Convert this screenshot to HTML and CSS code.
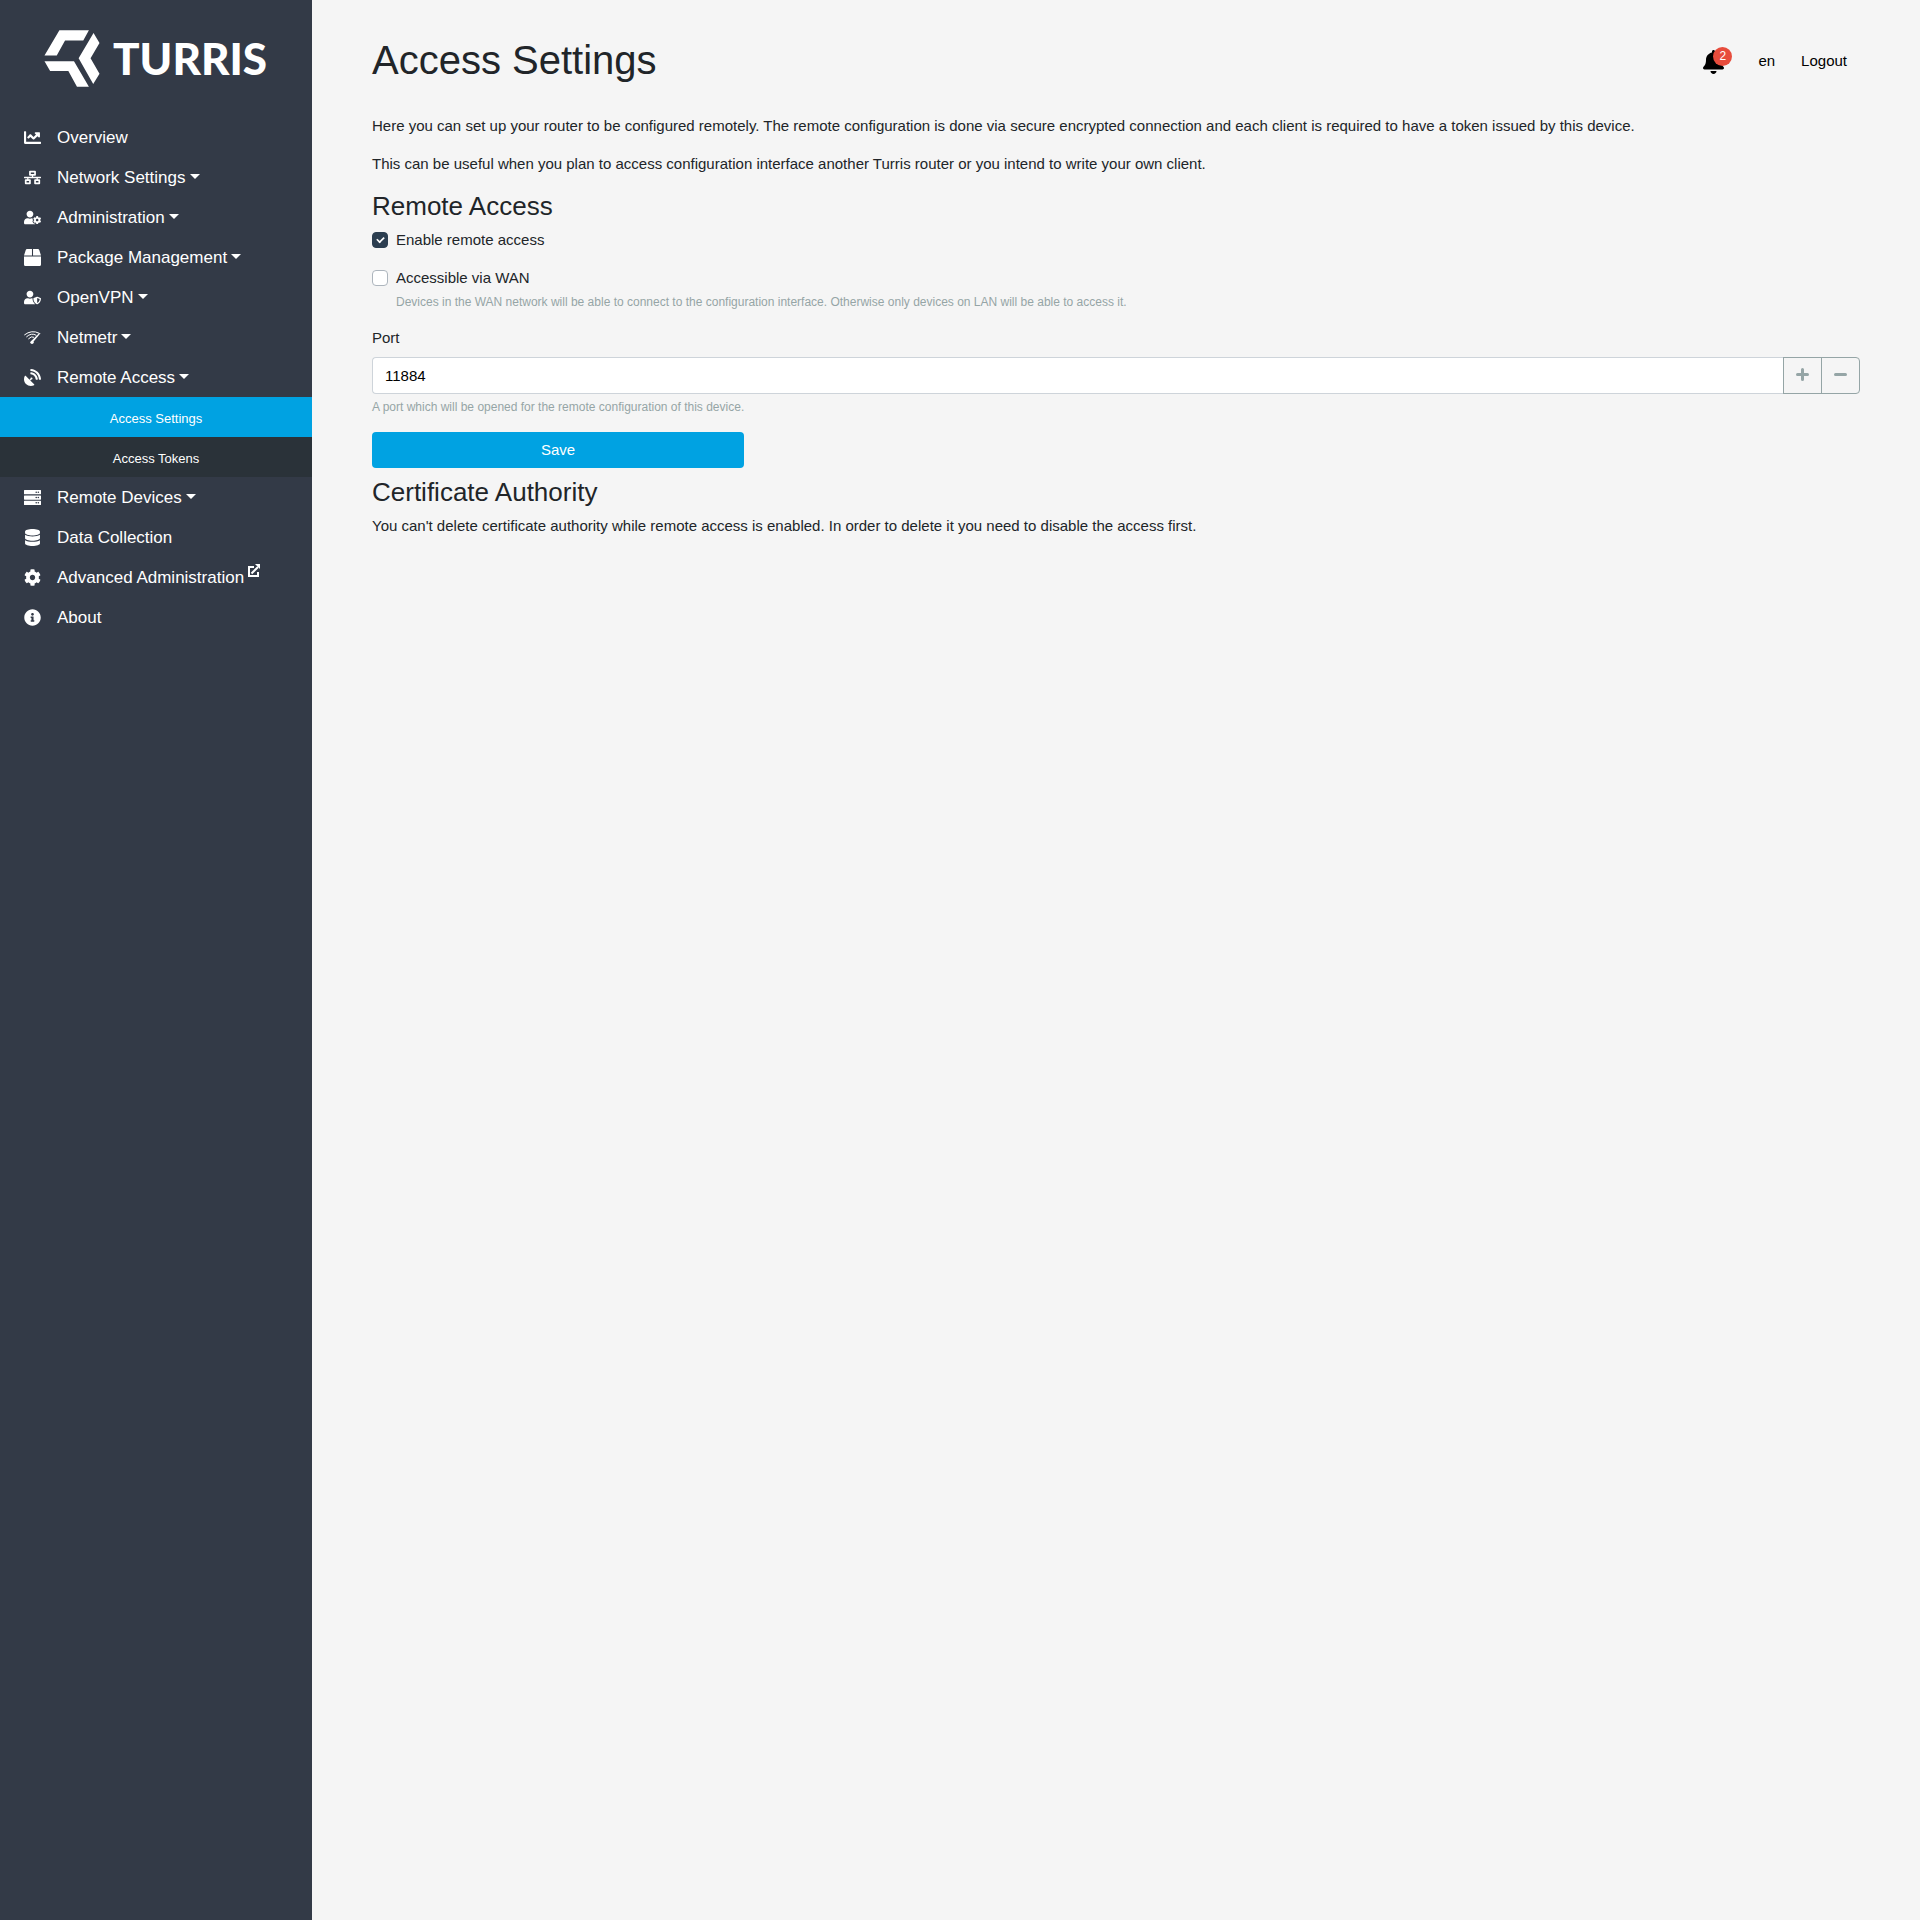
FILE: index.html
```html
<!DOCTYPE html>
<html lang="en">
<head>
<meta charset="utf-8">
<meta name="viewport" content="width=device-width, initial-scale=1">
<title>Access Settings - Turris</title>
<link rel="stylesheet" href="styles.css">
</head>
<body>
<div class="layout">
  <aside class="sidebar">
    <a class="logo" href="#" aria-label="Turris">
      <svg class="logo-mark" viewBox="0 0 168 172" aria-hidden="true"><path d="M46 1H135L118 32H63L38 77H1ZM149 9L167 39L140 85L167 132L148 163L104 85ZM1 94H90L135 171H99L73 124H18Z"/></svg>
      <span class="logo-text">TURRIS</span>
    </a>
    <nav class="menu">
      <a class="menu-item" href="#"><svg class="icon" viewBox="0 0 512 512"><path d="M496 384H64V80c0-8.840-7.160-16-16-16H16C7.160 64 0 71.160 0 80v336c0 17.670 14.330 32 32 32h464c8.840 0 16-7.160 16-16v-32c0-8.840-7.160-16-16-16zM464 96H345.940c-21.380 0-32.090 25.850-16.970 40.970l32.400 32.400L288 242.750l-73.370-73.370c-12.500-12.500-32.760-12.500-45.250 0l-68.690 68.690c-6.250 6.250-6.250 16.380 0 22.630l22.620 22.620c6.250 6.250 16.380 6.250 22.630 0L192 237.250l73.370 73.370c12.500 12.500 32.760 12.500 45.250 0l96-96 32.400 32.400c15.120 15.120 40.970 4.410 40.970-16.970V112c.01-8.840-7.150-16-15.990-16z"/></svg><span>Overview</span></a>
      <a class="menu-item has-caret" href="#"><svg class="icon" viewBox="0 0 640 512"><path d="M640 264v-16c0-8.840-7.160-16-16-16H344v-40h72c17.670 0 32-14.330 32-32V32c0-17.670-14.330-32-32-32H224c-17.670 0-32 14.330-32 32v128c0 17.670 14.330 32 32 32h72v40H16c-8.840 0-16 7.160-16 16v16c0 8.840 7.160 16 16 16h104v40H64c-17.670 0-32 14.330-32 32v128c0 17.670 14.330 32 32 32h160c17.670 0 32-14.330 32-32V352c0-17.670-14.330-32-32-32h-56v-40h304v40h-56c-17.670 0-32 14.330-32 32v128c0 17.670 14.330 32 32 32h160c17.670 0 32-14.330 32-32V352c0-17.670-14.330-32-32-32h-56v-40h104c8.840 0 16-7.160 16-16zM256 128V64h128v64H256zm-64 320H96v-64h96v64zm352 0h-96v-64h96v64z"/></svg><span>Network Settings</span></a>
      <a class="menu-item has-caret" href="#"><svg class="icon" viewBox="0 0 640 512"><path d="M610.5 373.3c2.6-14.1 2.6-28.5 0-42.6l25.8-14.9c3-1.7 4.3-5.2 3.3-8.5-6.7-21.6-18.2-41.2-33.2-57.4-2.3-2.5-6-3.1-9-1.4l-25.8 14.9c-10.9-9.3-23.4-16.5-36.9-21.3v-29.8c0-3.4-2.4-6.4-5.7-7.1-22.3-5-45-4.8-66.2 0-3.3.7-5.7 3.7-5.7 7.1v29.8c-13.5 4.8-26 12-36.9 21.3l-25.8-14.9c-2.9-1.7-6.7-1.1-9 1.4-15 16.2-26.5 35.8-33.2 57.4-1 3.3.4 6.8 3.3 8.5l25.8 14.9c-2.6 14.1-2.6 28.5 0 42.6l-25.8 14.9c-3 1.7-4.3 5.2-3.3 8.5 6.7 21.6 18.2 41.1 33.2 57.4 2.3 2.5 6 3.1 9 1.4l25.8-14.9c10.9 9.3 23.4 16.5 36.900 21.3v29.8c0 3.4 2.4 6.4 5.7 7.1 22.3 5 45 4.8 66.2 0 3.3-.7 5.7-3.7 5.7-7.1v-29.8c13.5-4.8 26-12 36.900-21.3l25.8 14.9c2.9 1.7 6.7 1.1 9-1.4 15-16.2 26.5-35.8 33.2-57.4 1-3.3-.4-6.8-3.3-8.5l-25.8-14.9zM496 400.5c-26.8 0-48.5-21.8-48.5-48.5s21.8-48.5 48.5-48.5 48.5 21.8 48.5 48.5-21.7 48.5-48.5 48.5zM224 256c70.7 0 128-57.3 128-128S294.7 0 224 0 96 57.3 96 128s57.3 128 128 128zm201.2 226.5c-2.3-1.2-4.6-2.6-6.8-3.9l-7.9 4.6c-6 3.4-12.8 5.3-19.6 5.3-10.9 0-21.4-4.6-28.9-12.6-18.3-19.8-32.3-43.9-40.2-69.6-5.5-17.7 1.9-36.4 17.9-45.7l7.900-4.600c-.1-2.6-.1-5.2 0-7.8l-7.9-4.6c-16-9.2-23.4-28-17.9-45.700.9-2.9 2.2-5.8 3.2-8.7-3.8-.3-7.500-1.200-11.400-1.200h-16.700c-22.200 10.200-46.900 16-72.900 16s-50.600-5.800-72.900-16h-16.700C60.200 288 0 348.200 0 422.400V464c0 26.500 21.500 48 48 48h352c10.100 0 19.500-3.200 27.200-8.500-1.200-3.800-2-7.700-2-11.800v-9.200z"/></svg><span>Administration</span></a>
      <a class="menu-item has-caret" href="#"><svg class="icon" viewBox="0 0 512 512"><path d="M509.500 184.600L458.900 32.800C452.400 13.200 434.100 0 413.400 0H272v192h238.700c-.4-2.500-.4-5-1.200-7.400zM240 0H98.600c-20.700 0-39 13.200-45.500 32.800L2.500 184.600c-.8 2.400-.8 4.900-1.200 7.400H240V0zM0 224v240c0 26.500 21.500 48 48 48h416c26.500 0 48-21.500 48-48V224H0z"/></svg><span>Package Management</span></a>
      <a class="menu-item has-caret" href="#"><svg class="icon" viewBox="0 0 640 512"><path d="M622.3 271.1l-115.2-45c-4.1-1.6-12.6-3.7-22.2 0l-115.2 45c-10.7 4.2-17.7 14-17.7 24.9 0 111.6 68.7 188.8 132.9 213.9 9.6 3.7 18 1.6 22.2 0C558.4 489.9 640 420.5 640 296c0-10.9-7-20.7-17.7-24.9zM496 462.4V273.3l95.5 37.3c-5.6 87.1-60.9 135.4-95.5 151.8zM224 256c70.7 0 128-57.3 128-128S294.7 0 224 0 96 57.3 96 128s57.3 128 128 128zm96 40c0-2.500.8-4.800 1.100-7.200-2.500-.1-4.900-.8-7.500-.8h-16.700c-22.200 10.200-46.900 16-72.900 16s-50.600-5.800-72.900-16h-16.700C60.200 288 0 348.200 0 422.400V464c0 26.500 21.500 48 48 48h352c6.800 0 13.300-1.500 19.200-4-54-42.900-99.200-116.700-99.200-212z"/></svg><span>OpenVPN</span></a>
      <a class="menu-item has-caret" href="#"><svg class="icon" viewBox="0 0 51 51"><path class="thin" d="M1 18Q23 1 46 13M7 24Q22 10 37 19M13 30Q22 20 30 25"/><path d="M50 12L27 40L21 37L45 13Z"/><circle cx="24" cy="40" r="5"/></svg><span>Netmetr</span></a>
      <a class="menu-item has-caret" href="#"><svg class="icon" viewBox="0 0 512 512"><path d="M305.450 462.590c7.390 7.300 6.190 20.100-3 25-77.710 41.800-176.730 29.910-242.340-35.710C-5.500 386.280-17.400 287.360 24.410 209.550c4.890-9.100 17.690-10.300 25-3L166.230 323.370l27.390-27.390c-.69-2.610-1.590-5-1.590-7.820a32 32 0 1 1 32 32c-2.800 0-5.200-.89-7.800-1.590l-27.410 27.390ZM511.980 303.070a16.100 16.100 0 0 1-16 17H463.860a15.970 15.970 0 0 1-15.890-15C440.470 175.550 336.450 70.530 207.030 63.530a15.840 15.840 0 0 1-15-15.910V16.030A16.090 16.090 0 0 1 209.030.02C372.250 8.620 503.470 139.840 511.980 303.070Zm-96.020-.3a16.210 16.210 0 0 1-16.110 17.300H367.640a16.070 16.070 0 0 1-15.890-14.710c-6.910-77.010-68.120-138.910-144.920-145.220a15.940 15.940 0 0 1-14.800-15.890V112.130a16.130 16.130 0 0 1 17.300-16.090C319.450 104.540 407.560 192.650 415.960 302.770Z"/></svg><span>Remote Access</span></a>
      <div class="submenu">
        <a class="submenu-item active" href="#">Access Settings</a>
        <a class="submenu-item" href="#">Access Tokens</a>
      </div>
      <a class="menu-item has-caret" href="#"><svg class="icon" viewBox="0 0 512 512"><path fill-rule="evenodd" d="M16 32H496a16 16 0 0 1 16 16V144a16 16 0 0 1-16 16H16a16 16 0 0 1-16-16V48a16 16 0 0 1 16-16ZM432 72a24 24 0 1 0 0 48a24 24 0 1 0 0-48ZM368 72a24 24 0 1 0 0 48a24 24 0 1 0 0-48ZM16 192H496a16 16 0 0 1 16 16V304a16 16 0 0 1-16 16H16a16 16 0 0 1-16-16V208a16 16 0 0 1 16-16ZM432 232a24 24 0 1 0 0 48a24 24 0 1 0 0-48ZM368 232a24 24 0 1 0 0 48a24 24 0 1 0 0-48ZM16 352H496a16 16 0 0 1 16 16V464a16 16 0 0 1-16 16H16a16 16 0 0 1-16-16V368a16 16 0 0 1 16-16ZM432 392a24 24 0 1 0 0 48a24 24 0 1 0 0-48ZM368 392a24 24 0 1 0 0 48a24 24 0 1 0 0-48Z"/></svg><span>Remote Devices</span></a>
      <a class="menu-item" href="#"><svg class="icon" viewBox="0 0 448 512"><path d="M448 73.143v45.714C448 159.143 347.667 192 224 192S0 159.143 0 118.857V73.143C0 32.857 100.333 0 224 0s224 32.857 224 73.143zM448 176v102.857C448 319.143 347.667 352 224 352S0 319.143 0 278.857V176c48.125 33.143 136.208 48.572 224 48.572S399.874 209.143 448 176zm0 160v102.857C448 479.143 347.667 512 224 512S0 479.143 0 438.857V336c48.125 33.143 136.208 48.572 224 48.572S399.874 369.143 448 336z"/></svg><span>Data Collection</span></a>
      <a class="menu-item" href="#"><svg class="icon" viewBox="0 0 512 512"><path d="M487.400 315.700l-42.600-24.600c4.300-23.200 4.300-47 0-70.200l42.600-24.600c4.900-2.800 7.100-8.600 5.500-14-11.100-35.600-30-67.800-54.700-94.600-3.800-4.100-10-5.100-14.800-2.300L380.800 110c-17.900-15.400-38.500-27.300-60.800-35.100V25.800c0-5.600-3.900-10.500-9.400-11.700-36.700-8.200-74.300-7.800-109.200 0-5.500 1.200-9.400 6.100-9.400 11.700V75c-22.200 7.900-42.800 19.800-60.800 35.100L88.700 85.500c-4.900-2.800-11-1.900-14.800 2.300-24.700 26.700-43.600 58.900-54.700 94.600-1.700 5.400.6 11.200 5.500 14L67.300 221c-4.300 23.200-4.300 47 0 70.200l-42.600 24.600c-4.900 2.800-7.100 8.600-5.500 14 11.100 35.600 30 67.800 54.700 94.600 3.800 4.100 10 5.100 14.800 2.300l42.600-24.600c17.900 15.400 38.500 27.300 60.800 35.100v49.200c0 5.600 3.900 10.500 9.400 11.700 36.700 8.200 74.300 7.800 109.200 0 5.500-1.200 9.400-6.100 9.400-11.700v-49.200c22.200-7.900 42.800-19.800 60.800-35.100l42.600 24.600c4.900 2.800 11 1.900 14.800-2.300 24.700-26.700 43.600-58.900 54.700-94.600 1.500-5.500-.7-11.300-5.600-14.100zM256 336c-44.100 0-80-35.900-80-80s35.900-80 80-80 80 35.900 80 80-35.900 80-80 80z"/></svg><span>Advanced Administration</span><svg class="external" viewBox="0 0 12 13"><path class="outline" d="M6 3H1V12H10V8M3.500 9.500L10 3"/><path d="M7 0H12V5Z"/></svg></a>
      <a class="menu-item" href="#"><svg class="icon" viewBox="0 0 512 512"><path d="M256 8C119.043 8 8 119.083 8 256c0 136.997 111.043 248 248 248s248-111.003 248-248C504 119.083 392.957 8 256 8zm0 110c23.196 0 42 18.804 42 42s-18.804 42-42 42-42-18.804-42-42 18.804-42 42-42zm56 254c0 6.627-5.373 12-12 12h-88c-6.627 0-12-5.373-12-12v-24c0-6.627 5.373-12 12-12h12v-64h-12c-6.627 0-12-5.373-12-12v-24c0-6.627 5.373-12 12-12h64c6.627 0 12 5.373 12 12v100h12c6.627 0 12 5.373 12 12v24z"/></svg><span>About</span></a>
    </nav>
  </aside>

  <main class="content">
    <header class="topbar">
      <h1>Access Settings</h1>
      <div class="topbar-actions">
        <button class="bell" type="button" aria-label="Notifications">
          <svg class="bell-icon" viewBox="0 0 448 512"><path d="M224 512c35.320 0 63.970-28.650 63.970-64H160.030c0 35.350 28.650 64 63.970 64zm215.390-149.710c-19.320-20.760-55.470-51.990-55.470-154.290 0-77.700-54.480-139.900-127.940-155.160V32c0-17.670-14.320-32-31.980-32s-31.980 14.330-31.980 32v20.840C118.560 68.100 64.080 130.300 64.080 208c0 102.300-36.150 133.530-55.470 154.290-6 6.450-8.660 14.160-8.610 21.710.11 16.400 12.980 32 32.100 32h383.800c19.120 0 32-15.600 32.100-32 .05-7.550-2.610-15.270-8.610-21.710z"/></svg>
          <span class="badge">2</span>
        </button>
        <button class="plain" type="button">en</button>
        <a class="plain" href="#">Logout</a>
      </div>
    </header>

    <p>Here you can set up your router to be configured remotely. The remote configuration is done via secure encrypted connection and each client is required to have a token issued by this device.</p>
    <p>This can be useful when you plan to access configuration interface another Turris router or you intend to write your own client.</p>

    <h2>Remote Access</h2>
    <form>
      <div class="check">
        <input type="checkbox" id="enable" checked>
        <label for="enable">Enable remote access</label>
      </div>
      <div class="check">
        <input type="checkbox" id="wan" aria-describedby="wan-help">
        <label for="wan">Accessible via WAN</label>
        <small id="wan-help" class="help">Devices in the WAN network will be able to connect to the configuration interface. Otherwise only devices on LAN will be able to access it.</small>
      </div>
      <div class="field">
        <label for="port">Port</label>
        <div class="input-group">
          <input type="text" inputmode="numeric" id="port" value="11884" aria-describedby="port-help">
          <button type="button" aria-label="Increase"><svg viewBox="0 0 13 13"><path d="M6.500 1.500V11.500M1.500 6.500H11.500"/></svg></button>
          <button type="button" aria-label="Decrease"><svg viewBox="0 0 13 13"><path d="M1.500 6.500H11.500"/></svg></button>
        </div>
        <small id="port-help" class="help">A port which will be opened for the remote configuration of this device.</small>
      </div>
      <button class="save" type="submit">Save</button>
    </form>

    <h2>Certificate Authority</h2>
    <p>You can't delete certificate authority while remote access is enabled. In order to delete it you need to disable the access first.</p>
  </main>
</div>
</body>
</html>
```
FILE: styles.css
```css
* {
  box-sizing: border-box;
}

body {
  margin: 0;
  background: #f5f5f5;
  color: #212529;
  font: 15px/23px "Liberation Sans", Arial, sans-serif;
}

a {
  text-decoration: none;
}

button,
input {
  font: inherit;
}

.layout {
  display: flex;
  min-height: 100vh;
}

/* Sidebar */
.sidebar {
  flex: 0 0 312px;
  background: #333a47;
  color: #fff;
}

.logo {
  display: flex;
  align-items: center;
  gap: 13px;
  height: 117px;
  padding-left: 44px;
  color: #fff;
}

.logo-mark {
  width: 56px;
  height: 57px;
  fill: currentColor;
}

.logo-text {
  font: 900 44px/57px Lato, sans-serif;
}

.menu-item {
  display: flex;
  align-items: center;
  height: 40px;
  padding: 0 24px;
  color: #fff;
  font-size: 17px;
}

.icon {
  width: 17px;
  height: 17px;
  margin-right: 16px;
  fill: currentColor;
}

.icon .thin {
  fill: none;
  stroke: currentColor;
  stroke-width: 3;
}

.has-caret::after {
  content: "";
  margin-left: 4px;
  margin-bottom: 2px;
  border-top: 5px solid;
  border-right: 5px solid transparent;
  border-left: 5px solid transparent;
}

.external {
  width: 12px;
  height: 13px;
  margin-left: 4px;
  margin-bottom: 13px;
  fill: currentColor;
}

.external .outline {
  fill: none;
  stroke: currentColor;
  stroke-width: 2;
}

.submenu {
  background: #2a3239;
}

.submenu-item {
  display: block;
  padding-top: 3px;
  color: #fff;
  font-size: 13px;
  line-height: 37px;
  text-align: center;
}

.submenu-item.active {
  background: #00a2e2;
}

/* Content */
.content {
  flex: 1;
  min-width: 0;
  padding: 36px 60px;
}

.topbar {
  display: flex;
  align-items: center;
  justify-content: space-between;
  margin-bottom: 30px;
}

h1,
h2 {
  margin: 0;
  font-weight: 400;
}

h1 {
  font-size: 40px;
  line-height: 48px;
}

h2 {
  margin-bottom: 6px;
  font-size: 26px;
  line-height: 32px;
}

p {
  margin: 0 0 15px;
}

.topbar-actions {
  display: flex;
  align-items: center;
  gap: 26px;
  padding-right: 13px;
}

.plain,
.bell {
  padding: 0;
  border: 0;
  background: none;
  color: #000;
}

.bell {
  position: relative;
  display: flex;
  width: 29px;
  padding-top: 3px;
}

.bell-icon {
  width: 21px;
  height: 24px;
}

.badge {
  position: absolute;
  top: 0;
  left: 10px;
  width: 19px;
  height: 19px;
  border-radius: 50%;
  background: #e74c3c;
  color: #fff;
  font-size: 12px;
  line-height: 19px;
  text-align: center;
}

.check {
  display: grid;
  grid-template-columns: 16px 1fr;
  column-gap: 8px;
  align-items: center;
  margin-bottom: 15px;
}

.check input {
  appearance: none;
  display: grid;
  place-items: center;
  width: 16px;
  height: 16px;
  margin: 0;
  border: 1px solid #adb5bd;
  border-radius: 4px;
  background: #fff;
}

.check input:checked {
  border-color: #2c3e50;
  background: #2c3e50;
}

.check input:checked::after {
  content: "";
  width: 7px;
  height: 4px;
  margin-bottom: 2px;
  border-bottom: 2px solid #fff;
  border-left: 2px solid #fff;
  transform: rotate(-45deg) scale(0.8);
}

.help {
  display: block;
  margin-top: 4px;
  color: #95a5a6;
  font-size: 12px;
  line-height: 18px;
}

.check .help {
  grid-column: 2;
}

.field {
  margin-bottom: 16px;
}

.field label {
  display: block;
  margin-bottom: 8px;
}

.input-group {
  display: flex;
}

.input-group input {
  flex: 1;
  min-width: 0;
  height: 37px;
  padding: 0 12px;
  border: 1px solid #ced4da;
  border-right: 0;
  border-radius: 4px 0 0 4px;
  background: #fff;
  color: #000;
}

.input-group button {
  display: grid;
  place-items: center;
  width: 39px;
  padding: 0 0 2px;
  border: 1px solid #95a5a6;
  background: none;
}

.input-group button:last-child {
  margin-left: -1px;
  border-radius: 0 4px 4px 0;
}

.input-group svg {
  width: 13px;
  height: 13px;
  fill: none;
  stroke: #95a5a6;
  stroke-width: 3;
  stroke-linecap: round;
}

.save {
  display: block;
  width: 25%;
  height: 36px;
  margin-bottom: 8px;
  padding: 0 0 1px;
  border: 0;
  border-radius: 4px;
  background: #00a2e2;
  color: #fff;
}
```
